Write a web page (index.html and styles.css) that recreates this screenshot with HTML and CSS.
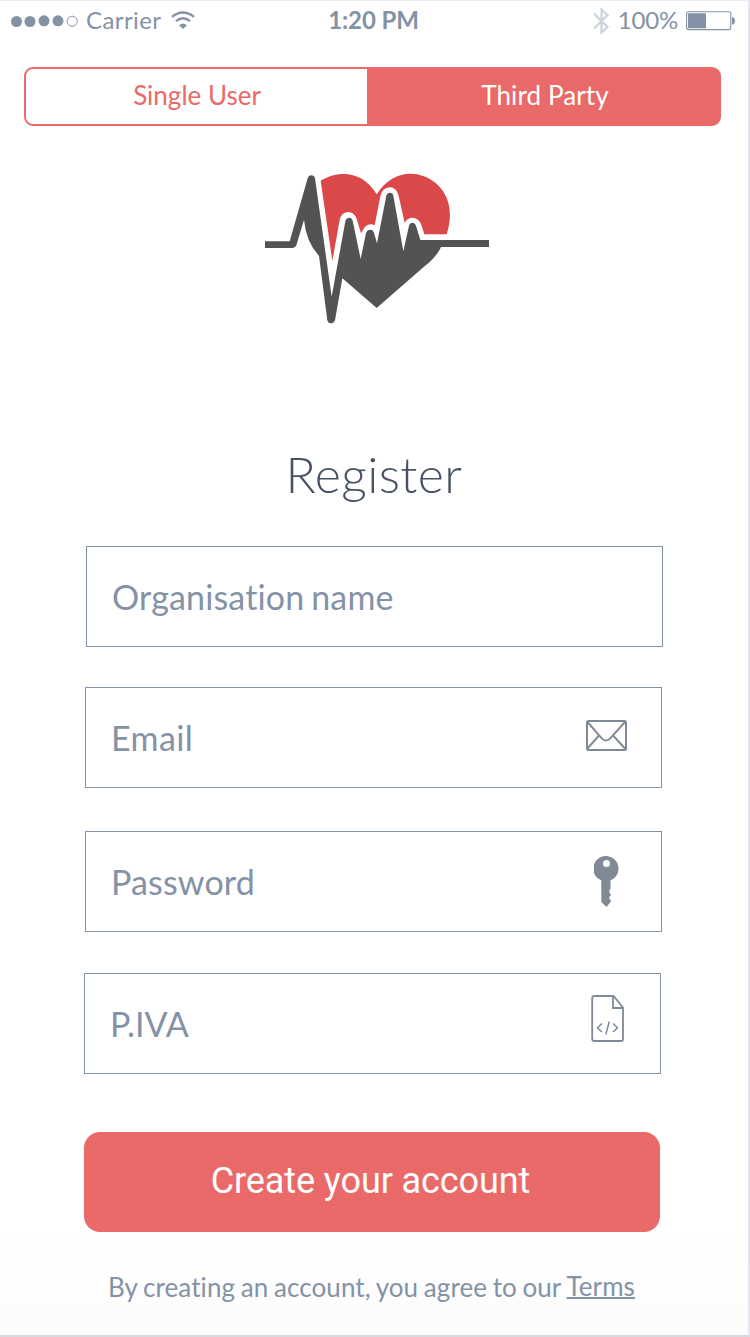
FILE: index.html
```html
<!DOCTYPE html>
<html lang="en">
<head>
<meta charset="utf-8">
<title>Register</title>
<link rel="stylesheet" href="styles.css">
</head>
<body>
<main class="screen">
  <header class="status">
    <div class="status-left">
      <svg class="signal" width="68" height="14" viewBox="0 0 68 14"><g fill="#8492a6"><circle cx="5.5" cy="7.5" r="5.5"/><circle cx="19" cy="7.5" r="5.5"/><circle cx="33" cy="6.8" r="5.5"/><circle cx="47" cy="6.8" r="5.5"/></g><circle cx="61.2" cy="7.3" r="5.1" fill="none" stroke="#8492a6"/></svg>
      <span class="carrier">Carrier</span>
      <svg class="wifi" width="24" height="19" viewBox="0 0 24 19" fill="none" stroke="#8492a6" stroke-width="2.3"><path d="M1 5.8Q12-2.8 23 5.8M4.9 10.2Q12 4.2 19.1 10.2"/><path d="M8.2 14.4Q12 10.4 15.8 14.4L12 18Z" fill="#8492a6" stroke="none"/></svg>
    </div>
    <span class="clock">1:20 PM</span>
    <div class="status-right">
      <svg class="bluetooth" width="17" height="28" viewBox="0 0 17 28" fill="none" stroke="#ccd2dc" stroke-width="2.2"><path d="M1 6.5 14.500 20 8.500 25.500V2.500L14.500 8 1 21.500"/></svg>
      <span class="percent">100%</span>
      <svg class="battery" width="50" height="20" viewBox="0 0 50 20"><rect x=".6" y=".8" width="44.2" height="17.8" rx="2" fill="none" stroke="#8492a6" stroke-width="1.1"/><path d="M2 2.2H20V17.2H2ZM46 6Q49 6.500 49 9.700Q49 13 46 13.500Z" fill="#8492a6"/></svg>
    </div>
  </header>

  <nav class="tabs">
    <a class="tab">Single User</a>
    <a class="tab tab-active">Third Party</a>
  </nav>

  <svg class="logo" width="245" height="175" viewBox="0 0 735 525">
    <path fill="#da484a" d="M197 62C250 29 325 32 365 103C410 30 490 25 543 70C590 112 592 170 575 223H508L499 194Q490 172 470 173Q457 174 449 188L431 108Q425 82 404 82Q382 84 376 108L359 196Q345 188 330 200L318 220L306 180Q299 156 279 156Q258 158 254 180L232 303Z"/>
    <path fill="#535353" d="M30 244H104L158 55Q161 46 169 46Q178 46 180 55L230 410L271 184Q274 173 282 173Q290 173 293 182L317 297L333 219Q337 209 346 209Q355 210 357 219L366 250L394 107Q397 98 405 98Q413 98 415 107L445 274L462 197Q465 188 473 188Q481 189 483 197L496 240H702V261H558C545 290 520 310 500 326L365 444L262 355L240 481Q236 490 228 490Q219 490 217 481L192 288Q153 245 147 180L124 256Q121 264 113 264H30Z"/>
  </svg>

  <h1 class="title">Register</h1>

  <form class="form">
    <div class="field field-name"><span class="label">Organisation name</span></div>
    <div class="field field-email"><span class="label">Email</span>
      <svg class="icon-mail" width="41" height="31" viewBox="0 0 41 31" fill="none" stroke="#7f8a96" stroke-width="2"><rect x="1" y="1" width="39" height="29" rx="1.500"/><path d="M1.500 2 16 18.500Q17.500 20.500 20 20.500Q22.500 20.500 24 18.500L39 2M1.500 28.500 12.500 16M39 28.500 27.500 16" stroke-width="1.900"/></svg>
    </div>
    <div class="field field-password"><span class="label">Password</span>
      <svg class="icon-key" width="26" height="52" viewBox="0 0 26 52"><path fill="#7f8a96" fill-rule="evenodd" d="M12.700 0A12.700 12.700 0 0 1 16.500 24.500V33L15.500 34V37L17.300 38.700 15.500 40.500V43L17.300 45 12.500 51 7.300 46V24.500A12.700 12.700 0 0 1 12.700 0ZM12.500 4A3.500 3.500 0 1 0 12.500 11A3.500 3.500 0 1 0 12.500 4Z"/></svg>
    </div>
    <div class="field field-iva"><span class="label">P.IVA</span>
      <svg class="icon-code" width="34" height="48" viewBox="0 0 34 48" fill="none" stroke="#7f8a96" stroke-width="1.800"><path d="M3.500 1H22.500L32 12.500V44Q32 46 30 46H3.500Q1.200 46 1.200 44V3Q1.200 1 3.500 1ZM22 1V13H32"/><path stroke-width="1.500" d="M11 28.500 6.500 32.700 11 37M22 28.500 26.500 32.700 22 37M18.300 26.500 14.800 39.500"/></svg>
    </div>
    <button class="submit" type="button">Create your account</button>
  </form>

  <p class="legal">By creating an account, you agree to our <a class="terms">Terms</a></p>
</main>
</body>
</html>
```
FILE: styles.css
```css
* { box-sizing: border-box; }
body {
  margin: 0;
  background: #fff;
  font-family: Lato, sans-serif;
  font-variant-ligatures: none;
  color: #8492a6;
}
.screen {
  width: 750px;
  height: 1337px;
  display: flex;
  flex-direction: column;
  border-top: 1px solid #e9edf3;
  border-right: 2px solid #e2e7ee;
  border-bottom: 2px solid #d5dbe1;
  background: linear-gradient(#fff 92%, #fcfcfc);
  overflow: hidden;
}
.status {
  height: 40px;
  display: grid;
  grid-template-columns: 1fr auto 1fr;
  align-items: center;
  padding: 0 12px 0 11px;
  font-size: 24px;
  line-height: 38px;
}
.status-left, .status-right { display: flex; align-items: center; }
.status-right { justify-content: flex-end; }
.carrier { margin: -2px 0 0 7px; letter-spacing: 0.4px; }
.wifi { margin: -1px 0 0 10px; }
.clock { font-weight: 700; letter-spacing: -0.1px; margin-top: -2px; }
.percent { margin: -2px 8px 0 8px; letter-spacing: -0.2px; }
.tabs {
  display: flex;
  width: 697px;
  height: 59px;
  margin: 26px 0 0 24px;
  border: 2px solid #e96a68;
  border-radius: 9px;
  background: linear-gradient(90deg, #fff 343px, #e96a68 343px) border-box;
  overflow: hidden;
  font-size: 26px;
  line-height: 52px;
  text-align: center;
}
.tab { width: 341px; padding-left: 1px; color: #e96a68; }
.tab-active { flex: 1; padding-left: 4px; color: #fff; letter-spacing: 0.1px; }
.logo { margin: 34px 0 0 255px; flex: none; }
.title {
  margin: 104px 0 1px;
  height: 70px;
  line-height: 70px;
  text-align: center;
  font-size: 50px;
  font-weight: 300;
  letter-spacing: 0.4px;
  color: #475362;
}
.form { display: flex; flex-direction: column; margin: 36px 0 0 84px; }
.field {
  display: flex;
  align-items: center;
  justify-content: space-between;
  width: 577px;
  height: 101px;
  border: 1px solid #8492a6;
  padding: 0 34px 0 25px;
  font-size: 34px;
}
.field-name { margin-left: 2px; letter-spacing: 0.15px; word-spacing: -2px; }
.field-email { margin: 40px 0 0 1px; letter-spacing: 0.4px; }
.field-password { margin: 43px 0 0 1px; padding-right: 41px; letter-spacing: 0.15px; }
.field-iva { margin-top: 41px; padding-right: 35px; }
.label { margin-top: -1px; }
.icon-mail { margin-bottom: 4px; }
.icon-code { margin-bottom: 9px; }
.submit {
  width: 576px;
  height: 100px;
  margin-top: 58px;
  padding: 0 3px 2px 0;
  border: 0;
  border-radius: 16px;
  background: #e96a68;
  color: #fff;
  font: 400 36px Roboto, sans-serif;
  letter-spacing: -0.1px;
}
.legal {
  margin: 37px 0 0 108px;
  font-size: 26px;
  line-height: 36px;
  white-space: nowrap;
  letter-spacing: 0.08px;
  word-spacing: -1.1px;
}
.terms {
  display: inline-block;
  margin-top: -1px;
  vertical-align: 1px;
  text-decoration: underline;
  text-decoration-thickness: 2px;
}
```
